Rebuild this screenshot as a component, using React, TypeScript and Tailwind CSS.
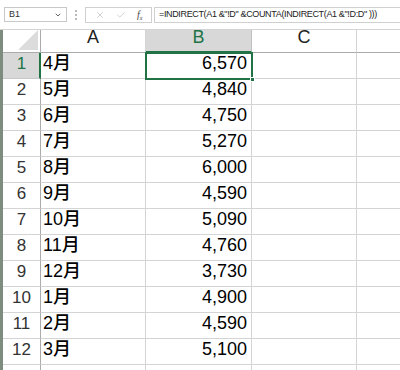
import { ChevronDown, Check, X } from 'lucide-react';

const ROWS: [string, string][] = [
  ['4月', '6,570'],
  ['5月', '4,840'],
  ['6月', '4,750'],
  ['7月', '5,270'],
  ['8月', '6,000'],
  ['9月', '4,590'],
  ['10月', '5,090'],
  ['11月', '4,760'],
  ['12月', '3,730'],
  ['1月', '4,900'],
  ['2月', '4,590'],
  ['3月', '5,100'],
  ['', ''],
];

const FONT = { fontFamily: '"Liberation Sans", "Noto Sans CJK JP", sans-serif' };

export default function App() {
  return (
    <div className="relative h-[370px] w-[400px] overflow-hidden bg-white text-[#222]" style={FONT}>
      {/* Formula bar */}
      <div className="flex h-[30px] items-center border-b border-[#d4d4d4] bg-white pl-[4px]">
        <div className="flex h-[15px] w-[63px] items-center justify-between border border-[#c8c8c8] px-[4px] text-[9px] text-[#333]">
          <span>B1</span>
          <ChevronDown size={8} strokeWidth={3} className="text-[#666]" />
        </div>
        <div className="mx-[8px] flex flex-col gap-[2px]">
          <span className="h-[2px] w-[2px] bg-[#bbb]" />
          <span className="h-[2px] w-[2px] bg-[#bbb]" />
          <span className="h-[2px] w-[2px] bg-[#bbb]" />
        </div>
        <div className="flex h-[16px] w-[67px] items-center justify-around border border-[#d0d0d0] px-[3px]">
          <X size={10} strokeWidth={1.5} className="text-[#b5b5b5]" />
          <Check size={10} strokeWidth={1.5} className="text-[#b5b5b5]" />
          <span className="font-['Liberation_Serif'] text-[10px] italic text-[#444]">
            f<sub className="text-[6px]">x</sub>
          </span>
        </div>
        <div className="ml-[2px] flex h-[16px] flex-1 items-center border border-r-0 border-[#d0d0d0] pl-[4px] text-[9px] tracking-[-0.35px] whitespace-nowrap text-[#222]">
          =INDIRECT(A1 &amp;"!D" &amp;COUNTA(INDIRECT(A1 &amp;"!D:D" )))
        </div>
      </div>

      <div className="flex">
        {/* window edge */}
        <div className="w-[3px] shrink-0 bg-[#7d8c7f]" />

        <div className="relative grid flex-1 grid-cols-[38px_105px_106px_105px_1fr] grid-rows-[23px_repeat(13,26px)]">
          {/* header row */}
          <div className="relative border-r border-b border-[#ababab] bg-white">
            <svg className="absolute right-[2px] bottom-[2px]" width="20" height="20" viewBox="0 0 20 20">
              <polygon points="20,0 20,20 0,20" fill="#dcdcdc" />
            </svg>
          </div>
          <div className="flex items-end justify-center border-r border-b border-r-[#d4d4d4] border-b-[#ababab] pb-[1px] text-[18px] text-[#222]">A</div>
          <div className="flex items-end justify-center border-r border-b-2 border-r-[#c0c0c0] border-b-[#217346] bg-[#d8d8d8] text-[18px] text-[#217346]">B</div>
          <div className="flex items-end justify-center border-r border-b border-r-[#d4d4d4] border-b-[#ababab] pb-[1px] text-[18px] text-[#222]">C</div>
          <div className="border-b border-[#ababab]" />

          {ROWS.map(([month, value], i) => {
            const sel = i === 0;
            return (
              <div key={i} className="contents">
                <div
                  className={
                    sel
                      ? 'flex items-end justify-center border-r-2 border-b border-r-[#217346] border-b-[#c8c8c8] bg-[#d8d8d8] pb-[2px] pl-[1px] text-[17px] text-[#217346]'
                      : 'flex items-end justify-center border-r border-b border-r-[#ababab] border-b-[#d4d4d4] pb-[2px] text-[17px] text-[#333]'
                  }
                >
                  {i < 12 ? i + 1 : ''}
                </div>
                <div className="flex items-end border-r border-b border-[#d4d4d4] pb-[1px] pl-[2px] text-[18px] font-medium text-black">
                  {month}
                </div>
                <div className="flex items-end justify-end border-r border-b border-[#d4d4d4] pr-[4px] pb-[1px] text-[18px] text-black">
                  {value}
                </div>
                <div className="border-r border-b border-[#d4d4d4]" />
                <div className="border-b border-[#d4d4d4]" />
              </div>
            );
          })}

          {/* active cell outline */}
          <div className="pointer-events-none absolute top-[22px] left-[142px] h-[28px] w-[108px] border-2 border-[#217346]">
            <span className="absolute -right-[4px] -bottom-[4px] h-[5px] w-[5px] border border-white bg-[#217346]" />
          </div>
        </div>
      </div>
    </div>
  );
}
